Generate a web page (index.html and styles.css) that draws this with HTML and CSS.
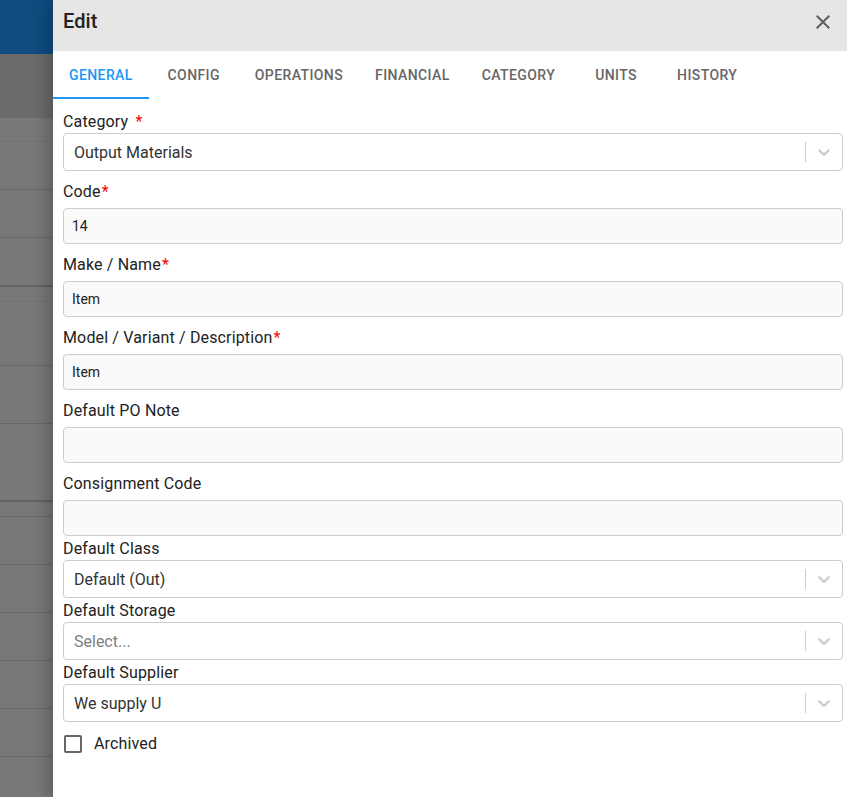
FILE: index.html
```html
<!DOCTYPE html>
<html>
<head>
<meta charset="utf-8">
<link rel="stylesheet" href="styles.css">
</head>
<body>
<div class="page">
  <div class="backdrop">
    <div class="bg-bar"></div>
    <div class="bg-band"></div>
    <div class="bg-row h24 faint"></div>
    <div class="bg-row h48"></div>
    <div class="bg-row h48"></div>
    <div class="bg-row h49 dark"></div>
    <div class="bg-row h15 faint"></div>
    <div class="bg-row h64"></div>
    <div class="bg-row h58"></div>
    <div class="bg-row h78 dark"></div>
    <div class="bg-row h15"></div>
    <div class="bg-row h48"></div>
    <div class="bg-row h48"></div>
    <div class="bg-row h48"></div>
    <div class="bg-row h48"></div>
    <div class="bg-row h48"></div>
  </div>
  <div class="panel">
    <div class="header">
      <div class="title">Edit</div>
      <svg class="close" viewBox="0 0 24 24" width="24" height="24"><path d="M19 6.41L17.59 5 12 10.59 6.41 5 5 6.41 10.59 12 5 17.59 6.41 19 12 13.41 17.59 19 19 17.59 13.41 12z" fill="#5f5f5f"/></svg>
    </div>
    <div class="tabs">
      <div class="tab active">General</div>
      <div class="tab">Config</div>
      <div class="tab">Operations</div>
      <div class="tab">Financial</div>
      <div class="tab">Category</div>
      <div class="tab">Units</div>
      <div class="tab">History</div>
    </div>
    <div class="form">
      <div class="label sel-first">Category <span class="req spaced">*</span></div>
      <div class="select">
        <div class="value">Output Materials</div>
        <span class="sep"></span>
        <svg class="chev" viewBox="0 0 20 20" width="20" height="20"><path d="M4.516 7.548c0.436-0.446 1.043-0.481 1.576 0l3.908 3.747 3.908-3.747c0.533-0.481 1.141-0.446 1.574 0 0.436 0.445 0.408 1.197 0 1.615-0.406 0.418-4.695 4.502-4.695 4.502-0.217 0.223-0.502 0.335-0.787 0.335s-0.57-0.112-0.789-0.335c0 0-4.287-4.084-4.695-4.502s-0.436-1.170 0-1.615z" fill="#cccccc"/></svg>
      </div>

      <div class="label txt">Code<span class="req">*</span></div>
      <div class="input">14</div>

      <div class="label txt">Make / Name<span class="req">*</span></div>
      <div class="input">Item</div>

      <div class="label txt">Model / Variant / Description<span class="req">*</span></div>
      <div class="input">Item</div>

      <div class="label txt">Default PO Note</div>
      <div class="input"></div>

      <div class="label txt">Consignment Code</div>
      <div class="input"></div>

      <div class="label sel">Default Class</div>
      <div class="select">
        <div class="value">Default (Out)</div>
        <span class="sep"></span>
        <svg class="chev" viewBox="0 0 20 20" width="20" height="20"><path d="M4.516 7.548c0.436-0.446 1.043-0.481 1.576 0l3.908 3.747 3.908-3.747c0.533-0.481 1.141-0.446 1.574 0 0.436 0.445 0.408 1.197 0 1.615-0.406 0.418-4.695 4.502-4.695 4.502-0.217 0.223-0.502 0.335-0.787 0.335s-0.57-0.112-0.789-0.335c0 0-4.287-4.084-4.695-4.502s-0.436-1.170 0-1.615z" fill="#cccccc"/></svg>
      </div>

      <div class="label sel">Default Storage</div>
      <div class="select">
        <div class="value placeholder">Select...</div>
        <span class="sep"></span>
        <svg class="chev" viewBox="0 0 20 20" width="20" height="20"><path d="M4.516 7.548c0.436-0.446 1.043-0.481 1.576 0l3.908 3.747 3.908-3.747c0.533-0.481 1.141-0.446 1.574 0 0.436 0.445 0.408 1.197 0 1.615-0.406 0.418-4.695 4.502-4.695 4.502-0.217 0.223-0.502 0.335-0.787 0.335s-0.57-0.112-0.789-0.335c0 0-4.287-4.084-4.695-4.502s-0.436-1.170 0-1.615z" fill="#cccccc"/></svg>
      </div>

      <div class="label sel">Default Supplier</div>
      <div class="select">
        <div class="value">We supply U</div>
        <span class="sep"></span>
        <svg class="chev" viewBox="0 0 20 20" width="20" height="20"><path d="M4.516 7.548c0.436-0.446 1.043-0.481 1.576 0l3.908 3.747 3.908-3.747c0.533-0.481 1.141-0.446 1.574 0 0.436 0.445 0.408 1.197 0 1.615-0.406 0.418-4.695 4.502-4.695 4.502-0.217 0.223-0.502 0.335-0.787 0.335s-0.57-0.112-0.789-0.335c0 0-4.287-4.084-4.695-4.502s-0.436-1.170 0-1.615z" fill="#cccccc"/></svg>
      </div>

      <div class="check">
        <span class="box"></span>
        <span class="check-label">Archived</span>
      </div>
    </div>
  </div>
</div>
</body>
</html>
```

FILE: styles.css
```css
* { box-sizing: border-box; }
html, body {
  margin: 0;
  padding: 0;
  width: 847px;
  height: 797px;
  overflow: hidden;
  font-family: Roboto, "Liberation Sans", sans-serif;
}
.page {
  display: flex;
  width: 847px;
  height: 797px;
  background: #787878;
}
.backdrop {
  width: 53px;
  flex: none;
  display: flex;
  flex-direction: column;
  background: #787878;
}
.bg-bar { height: 54px; background: #104c80; flex: none; }
.bg-band { height: 64px; background: #6b6b6b; flex: none; }
.bg-row { flex: none; border-bottom: 1px solid #686868; }
.bg-row.faint { border-bottom-color: #727272; }
.bg-row.dark { border-bottom: 2px solid #626262; }
.h15 { height: 15px; }
.h24 { height: 24px; }
.h48 { height: 48px; }
.h49 { height: 49px; }
.h58 { height: 58px; }
.h64 { height: 64px; }
.h78 { height: 78px; }

.panel {
  flex: 1;
  background: #fff;
  box-shadow: -6px 0 14px rgba(0,0,0,0.22);
  position: relative;
  display: flex;
  flex-direction: column;
}
.header {
  height: 51px;
  background: #e6e6e6;
  display: flex;
  align-items: flex-start;
  justify-content: space-between;
  padding: 9px 12px 0 10px;
}
.title {
  font-size: 20px;
  line-height: 24px;
  font-weight: 500;
  color: #222;
  letter-spacing: 0.1px;
}
.close { display: block; margin-top: 1px; }

.tabs {
  display: flex;
  height: 48px;
}
.tab {
  min-width: 90px;
  padding: 0 16px;
  display: flex;
  align-items: center;
  justify-content: center;
  text-transform: uppercase;
  font-size: 14px;
  font-weight: 500;
  letter-spacing: 0.4px;
  color: #666;
}
.tab.active {
  color: #2196f3;
  border-bottom: 2px solid #2196f3;
  padding-top: 2px;
}

.form {
  padding: 13px 4px 0 10px;
  display: flex;
  flex-direction: column;
}
.label {
  font-size: 16px;
  line-height: 20px;
  height: 20px;
  color: #222;
  letter-spacing: 0.15px;
}
.req { color: #f00; margin-left: 1px; }
.req.spaced { margin-left: 3px; }
.label.sel-first { margin-bottom: 1px; }
.label.txt { margin-top: 11px; margin-bottom: 6px; }
.label.sel { margin-top: 3px; margin-bottom: 1px; }

.select {
  height: 38px;
  border: 1px solid #ccc;
  border-radius: 4px;
  background: #fff;
  display: flex;
  align-items: center;
}
.value {
  flex: 1;
  padding: 0 10px;
  font-size: 16px;
  color: #333;
}
.value.placeholder { color: #808080; }
.sep {
  width: 1px;
  height: 20px;
  background: #ccc;
}
.chev { margin: 0 8px; display: block; }

.input {
  height: 36px;
  border: 1px solid #ccc;
  border-radius: 4px;
  background: #fafafa;
  padding: 0 8px;
  font-size: 14px;
  color: #222;
  display: flex;
  align-items: center;
}

.check {
  display: flex;
  align-items: center;
  margin-top: 12px;
  padding-left: 1px;
}
.box {
  width: 18px;
  height: 18px;
  border: 2px solid #666;
  border-radius: 2px;
}
.check-label {
  margin-left: 12px;
  font-size: 16px;
  color: #222;
  letter-spacing: 0.15px;
}
```
